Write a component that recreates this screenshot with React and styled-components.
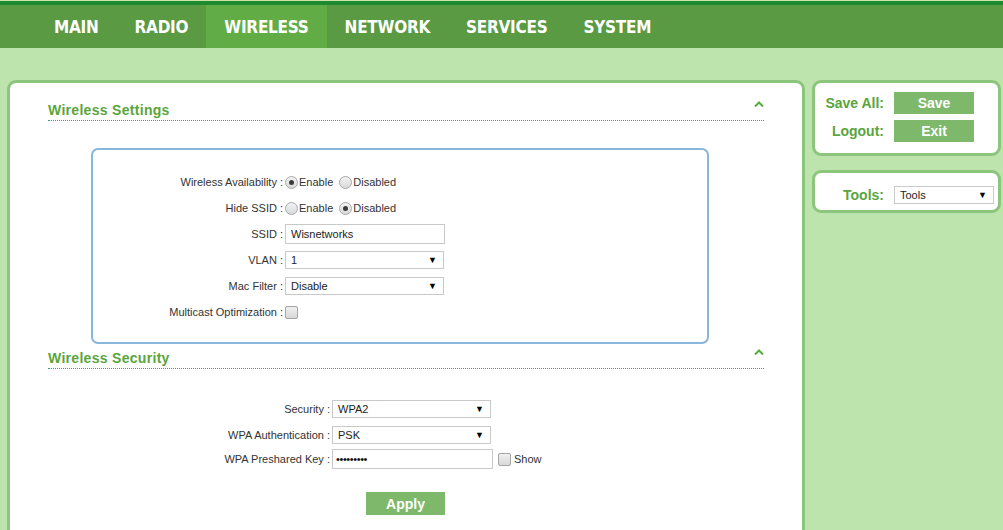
import React from "react";
import styled, { createGlobalStyle } from "styled-components";

const GlobalStyle = createGlobalStyle`
  html, body { margin: 0; padding: 0; overflow: hidden; }
  body {
    background: #bce4ac;
    font-family: "Liberation Sans", Arial, sans-serif;
    width: 1003px;
    height: 530px;
  }
`;

const Page = styled.div`
  display: flex;
  flex-direction: column;
  height: 530px;
`;

const TopStrip = styled.div`
  height: 1px;
  background: #cfe2aa;
`;

const Nav = styled.nav`
  display: flex;
  height: 43px;
  padding-left: 36px;
  background: #5a9a43;
  border-top: 4px solid #1e8a2f;
`;

const Tab = styled.div`
  display: flex;
  align-items: center;
  padding: 0 18px;
  color: #fff;
  font-family: "Liberation Sans Narrow", "DejaVu Sans Condensed", "Arial Narrow", sans-serif;
  font-weight: bold;
  font-size: 17px;
  letter-spacing: -0.25px;
  background: ${(p) => (p.$active ? "#62ac45" : "transparent")};
`;

const Body = styled.div`
  display: flex;
  gap: 7px;
  padding: 32px 2px 0 7px;
  flex: 1;
  min-height: 0;
`;

const MainPanel = styled.main`
  flex: 0 0 798px;
  box-sizing: border-box;
  height: 470px;
  background: #fff;
  border: 3px solid #8cc57c;
  border-radius: 9px 9px 0 0;
  padding: 14px 38px 0 38px;
`;

const SectionHeader = styled.div`
  display: flex;
  justify-content: space-between;
  align-items: flex-start;
  box-sizing: border-box;
  height: 24px;
  padding-top: 3px;
  border-bottom: 1px dotted #2fa67a;
  margin-top: ${(p) => p.$mt || 0}px;
`;

const SectionTitle = styled.h2`
  margin: 0;
  line-height: 20px;
  font-size: 14px;
  font-weight: bold;
  color: #5aa53b;
  letter-spacing: 0.3px;
`;

const Caret = styled.svg`
  width: 10px;
  height: 6px;
  margin-top: 1px;
`;

const FieldBox = styled.div`
  box-sizing: border-box;
  width: 618px;
  margin: 27px 0 0 43px;
  border: 2px solid #8ab6da;
  border-radius: 7px;
  padding: 19px 0 17px 0;
`;

const Form = styled.div`
  display: grid;
  grid-template-columns: ${(p) => p.$labelWidth}px auto;
  grid-template-rows: ${(p) => p.$rows};
  column-gap: 2px;
  align-items: center;
  justify-items: start;
  margin-top: ${(p) => p.$mt || 0}px;
`;

const Label = styled.label`
  justify-self: end;
  font-size: 11px;
  color: #333;
  white-space: nowrap;
  line-height: 13px;
`;

const Controls = styled.div`
  display: flex;
  align-items: center;
  font-size: 11px;
  color: #333;
`;

const Radio = styled.span`
  box-sizing: border-box;
  width: 13px;
  height: 13px;
  border-radius: 50%;
  border: 1px solid #a7a7a7;
  background: linear-gradient(#f3f3f3, #d9d9d9);
  display: inline-flex;
  align-items: center;
  justify-content: center;
  margin-right: 1px;
  &::after {
    content: "";
    width: 5px;
    height: 5px;
    border-radius: 50%;
    background: ${(p) => (p.$checked ? "#3a3a3a" : "transparent")};
  }
`;

const OptionText = styled.span`
  margin-right: ${(p) => p.$mr || 0}px;
`;

const TextInput = styled.div`
  box-sizing: border-box;
  width: ${(p) => p.$w}px;
  height: ${(p) => p.$h || 20}px;
  border: 1px solid #c9c9c9;
  padding: 0 ${(p) => p.$pl || 5}px;
  display: flex;
  align-items: center;
  font-size: 11px;
  color: #222;
`;

const Dots = styled.span`
  font-size: 11px;
  letter-spacing: -0.4px;
  color: #111;
`;

const Select = styled.div`
  box-sizing: border-box;
  width: ${(p) => p.$w}px;
  height: 18px;
  border: 1px solid #c9c9c9;
  padding: 0 5px;
  display: flex;
  align-items: center;
  justify-content: space-between;
  font-size: 11px;
  color: #222;
  background: #fff;
`;

const Arrow = styled.span`
  font-size: 9px;
  color: #000;
  margin-right: 1px;
`;

const Check = styled.span`
  box-sizing: border-box;
  width: 13px;
  height: 13px;
  border: 1px solid #a4a4a4;
  border-radius: 2px;
  background: linear-gradient(#f0f0f0, #d8d8d8);
  margin-left: ${(p) => p.$ml || 0}px;
  margin-right: 3px;
`;

const ApplyRow = styled.div`
  display: flex;
  justify-content: center;
  margin-top: 22px;
  padding-right: 1px;
`;

const Button = styled.button`
  width: ${(p) => p.$w || 80}px;
  height: ${(p) => p.$h || 22}px;
  border: none;
  background: #7db86b;
  color: #fff;
  font-family: "Liberation Sans", Arial, sans-serif;
  font-weight: bold;
  font-size: 14px;
  padding: 0;
`;

const Sidebar = styled.aside`
  flex: 1;
  display: flex;
  flex-direction: column;
  gap: 14px;
`;

const SidePanel = styled.div`
  box-sizing: border-box;
  height: ${(p) => p.$h}px;
  background: #fff;
  border: 3px solid #8cc57c;
  border-radius: 9px;
  padding: ${(p) => p.$pad};
  display: grid;
  grid-template-columns: 1fr ${(p) => p.$ctl}px;
  column-gap: 10px;
  row-gap: 6px;
  align-content: start;
  align-items: center;
`;

const SideLabel = styled.span`
  justify-self: end;
  white-space: nowrap;
  font-size: 14px;
  font-weight: bold;
  color: #5aa53b;
`;

const CaretUp = () => (
  <Caret viewBox="0 0 10 6">
    <path d="M1 5.5 L5 1.5 L9 5.5" fill="none" stroke="#56ad3d" strokeWidth="2" />
  </Caret>
);

export default function App() {
  const tabs = ["MAIN", "RADIO", "WIRELESS", "NETWORK", "SERVICES", "SYSTEM"];
  return (
    <>
      <GlobalStyle />
      <Page>
        <TopStrip />
        <Nav>
          {tabs.map((t) => (
            <Tab key={t} $active={t === "WIRELESS"}>
              {t}
            </Tab>
          ))}
        </Nav>
        <Body>
          <MainPanel>
            <SectionHeader>
              <SectionTitle>Wireless Settings</SectionTitle>
              <CaretUp />
            </SectionHeader>
            <FieldBox>
              <Form $labelWidth={190} $rows="repeat(6, 26px)">
                <Label>Wireless Availability :</Label>
                <Controls>
                  <Radio $checked />
                  <OptionText $mr={6}>Enable</OptionText>
                  <Radio />
                  <OptionText>Disabled</OptionText>
                </Controls>
                <Label>Hide SSID :</Label>
                <Controls>
                  <Radio />
                  <OptionText $mr={6}>Enable</OptionText>
                  <Radio $checked />
                  <OptionText>Disabled</OptionText>
                </Controls>
                <Label>SSID :</Label>
                <Controls>
                  <TextInput $w={160}>Wisnetworks</TextInput>
                </Controls>
                <Label>VLAN :</Label>
                <Controls>
                  <Select $w={159}>
                    <span>1</span>
                    <Arrow>▼</Arrow>
                  </Select>
                </Controls>
                <Label>Mac Filter :</Label>
                <Controls>
                  <Select $w={159}>
                    <span>Disable</span>
                    <Arrow>▼</Arrow>
                  </Select>
                </Controls>
                <Label>Multicast Optimization :</Label>
                <Controls>
                  <Check />
                </Controls>
              </Form>
            </FieldBox>
            <SectionHeader $mt={1}>
              <SectionTitle>Wireless Security</SectionTitle>
              <CaretUp />
            </SectionHeader>
            <Form $labelWidth={282} $rows="26px 26px 22px" $mt={27}>
              <Label>Security :</Label>
              <Controls>
                <Select $w={159}>
                  <span>WPA2</span>
                  <Arrow>▼</Arrow>
                </Select>
              </Controls>
              <Label>WPA Authentication :</Label>
              <Controls>
                <Select $w={159}>
                  <span>PSK</span>
                  <Arrow>▼</Arrow>
                </Select>
              </Controls>
              <Label>WPA Preshared Key :</Label>
              <Controls>
                <TextInput $w={161} $pl={3}>
                  <Dots>•••••••••</Dots>
                </TextInput>
                <Check $ml={5} />
                <OptionText>Show</OptionText>
              </Controls>
            </Form>
            <ApplyRow>
              <Button $w={79} $h={23}>Apply</Button>
            </ApplyRow>
          </MainPanel>
          <Sidebar>
            <SidePanel $h={76} $ctl={80} $pad="9px 24px 0 6px">
              <SideLabel>Save All:</SideLabel>
              <Button>Save</Button>
              <SideLabel>Logout:</SideLabel>
              <Button>Exit</Button>
            </SidePanel>
            <SidePanel $h={43} $ctl={100} $pad="13px 4px 0 6px">
              <SideLabel>Tools:</SideLabel>
              <Select $w={100}>
                <span>Tools</span>
                <Arrow>▼</Arrow>
              </Select>
            </SidePanel>
          </Sidebar>
        </Body>
      </Page>
    </>
  );
}
